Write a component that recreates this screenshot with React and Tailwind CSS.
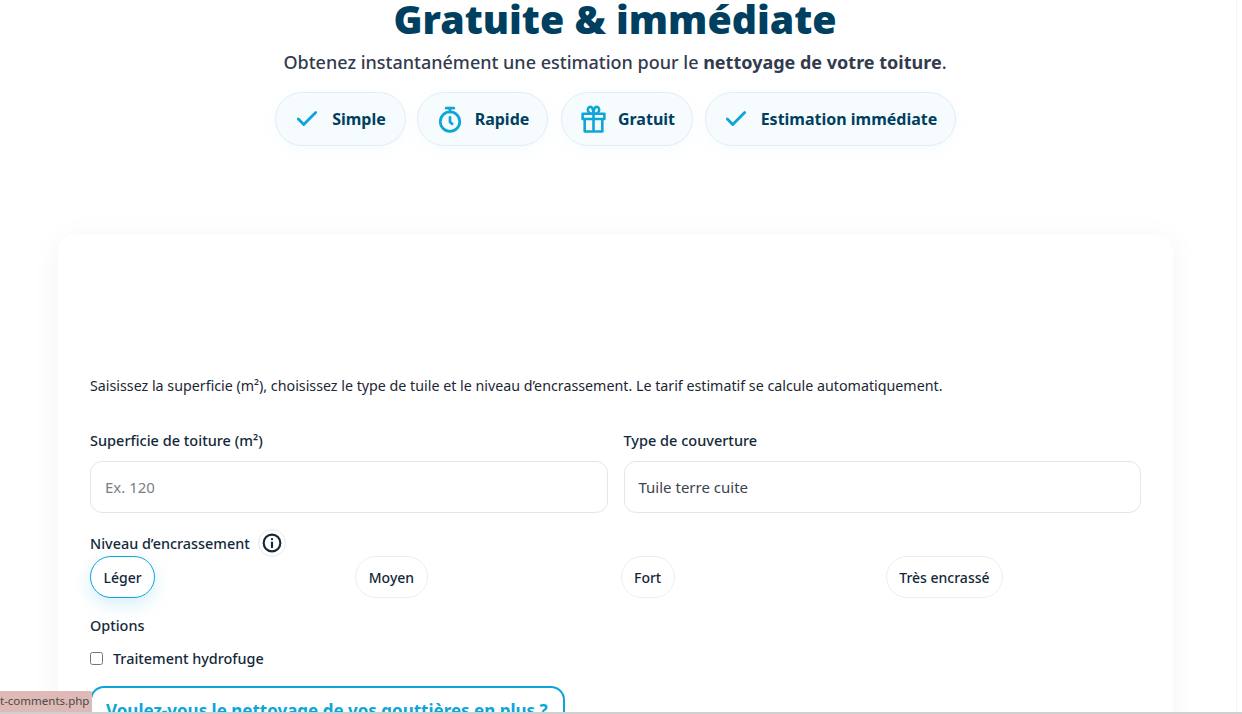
import { Check } from "lucide-react";

const font = "font-['Noto_Sans','Open_Sans',sans-serif]";

function Timer() {
  return (
    <svg width="26" height="27" viewBox="0 0 24 25" fill="none" stroke="#0ea5d9" strokeWidth="2.5" strokeLinecap="round" strokeLinejoin="round">
      <path d="M8.500 2h7" />
      <path d="M12 2v3.500" />
      <circle cx="12" cy="14.500" r="9" />
      <path d="M12 10.500v4.500l2 1.500" />
    </svg>
  );
}

function Gift() {
  return (
    <svg width="25" height="28" viewBox="0 0 24 27" fill="none" stroke="#0ea5d9" strokeWidth="2.5" strokeLinejoin="round">
      <rect x="1.500" y="8.500" width="21" height="5" />
      <path d="M3.500 13.500V25.500h17V13.500" />
      <path d="M12 8.500v17" />
      <path d="M12 8.500C9 8.500 6.500 7 6.500 4.500S9 1 10.500 2.500 12 6 12 8.500ZM12 8.500c3 0 5.500-1.500 5.500-4S15 1 13.500 2.500 12 6 12 8.500Z" />
    </svg>
  );
}

const badges = [
  { label: "Simple", icon: <Check size={26} color="#0ea5d9" strokeWidth={2.6} />, cls: "w-[131px] mr-[11px]" },
  { label: "Rapide", icon: <Timer />, cls: "w-[131px] mr-[13px] pl-[2px]" },
  { label: "Gratuit", icon: <Gift />, cls: "w-[132px] mr-[12px] pl-[3px]" },
  { label: "Estimation immédiate", icon: <Check size={26} color="#0ea5d9" strokeWidth={2.6} />, cls: "w-[251px]" },
];

const levels = ["Léger", "Moyen", "Fort", "Très encrassé"];

export default function App() {
  return (
    <div className={`relative h-[714px] w-[1242px] overflow-hidden bg-white ${font}`}>
      <div className="h-[712px] w-[1237px] border-r border-[#f5f5f5]">
        <div className="flex flex-col items-center pr-[6px]">
          <h1 className="h-[40px] text-[39.300px] leading-[38px] font-black text-[#003f5f]">Gratuite &amp; immédiate</h1>
          <p className="mt-[9px] h-[26px] text-[18px] leading-[26px] font-medium text-[#333b4f]">
            Obtenez instantanément une estimation pour le <strong className="font-bold">nettoyage de votre toiture</strong>.
          </p>
          <div className="mt-[17px] flex">
            {badges.map((b) => (
              <div
                key={b.label}
                className={`${b.cls} flex h-[54px] items-center justify-center gap-[12px] rounded-[27px] border border-[#e2edf6] bg-[#f6fbfe] shadow-[0_4px_16px_rgba(14,165,217,0.04)]`}
              >
                {b.icon}
                <span className="text-[16px] font-bold text-[#003f5f]">{b.label}</span>
              </div>
            ))}
          </div>
        </div>

        <div className="mt-[89px] ml-[58px] h-[520px] w-[1115px] rounded-t-[16px] bg-white px-[32px] shadow-[0_4px_30px_rgba(0,0,0,0.05)]">
          <p className="pt-[141px] text-[14.25px] leading-[20px] text-[#1c2733]">
            Saisissez la superficie (m²), choisissez le type de tuile et le niveau d’encrassement. Le tarif estimatif se calcule automatiquement.
          </p>

          <div className="mt-[34px] grid grid-cols-2 gap-[16px]">
            <div>
              <label className="block text-[14.5px] leading-[20px] font-medium text-[#13293a]">Superficie de toiture (m²)</label>
              <div className="mt-[11px] flex h-[52px] items-center rounded-[12px] border border-[#e3e6ea] px-[14px] text-[15px] text-[#7a8087]">Ex. 120</div>
            </div>
            <div>
              <label className="block text-[14.5px] leading-[20px] font-medium text-[#13293a]">Type de couverture</label>
              <div className="mt-[11px] flex h-[52px] items-center rounded-[12px] border border-[#e3e6ea] px-[14px] text-[15px] text-[#3c444d]">Tuile terre cuite</div>
            </div>
          </div>

          <div className="mt-[16px] flex h-[27px] items-center gap-[8px]">
            <span className="pt-[2px] text-[14.4px] font-medium text-[#13293a]">Niveau d’encrassement</span>
            <span className="flex h-[28px] w-[28px] items-center justify-center rounded-full border border-[#e6e9ec] bg-white">
              <svg width="20" height="20" viewBox="0 0 24 24" fill="none" stroke="#13293a" strokeWidth="2.6" strokeLinecap="round">
                <circle cx="12" cy="12" r="10" />
                <path d="M12 11.500v5.500" />
                <path d="M12 7.200v.3" />
              </svg>
            </span>
          </div>

          <div className="grid grid-cols-4 gap-[10px]">
            {levels.map((l, i) => (
              <div key={l}>
                <span
                  className={
                    i === 0
                      ? "inline-flex h-[42px] items-center rounded-[21px] border border-[#0ea5d9] bg-white px-[12.5px] text-[14px] font-medium text-[#13293a] shadow-[0_6px_18px_rgba(14,165,217,0.18)]"
                      : "inline-flex h-[42px] items-center rounded-[21px] border border-[#eceef1] bg-white px-[12.5px] text-[14px] font-medium text-[#13293a]"
                  }
                >
                  {l}
                </span>
              </div>
            ))}
          </div>

          <div className="mt-[18px] text-[14.4px] leading-[20px] font-medium text-[#13293a]">Options</div>
          <label className="mt-[13px] flex h-[20px] items-center gap-[10px] text-[14.4px] font-medium text-[#13293a]">
            <span className="-mt-[2px] h-[13px] w-[13px] rounded-[2.5px] border border-[#767676] bg-white" />
            Traitement hydrofuge
          </label>

          <div className="mt-[17px] h-[60px] w-[475px] rounded-t-[14px] border-2 border-[#0ea5d9] px-[14px] pt-[11px] text-[17px] leading-[24px] font-bold text-[#0ea5d9]">
            Voulez-vous le nettoyage de vos gouttières en plus ?
          </div>
        </div>
      </div>

      {/* status bar tooltip */}
      <div className="absolute bottom-[2px] left-0 h-[21px] w-[92px] overflow-hidden rounded-tr-[2px] border-r border-[#c9c2c1] bg-[#deb9b6] pt-[2px] text-right text-[11.5px] leading-[16px] whitespace-nowrap text-[#4a4a4a]">
        <span className="pr-[4px]">t-comments.php</span>
      </div>
      <div className="absolute right-0 bottom-0 left-0 h-[2px] bg-[#d0d0d0]" />
    </div>
  );
}
